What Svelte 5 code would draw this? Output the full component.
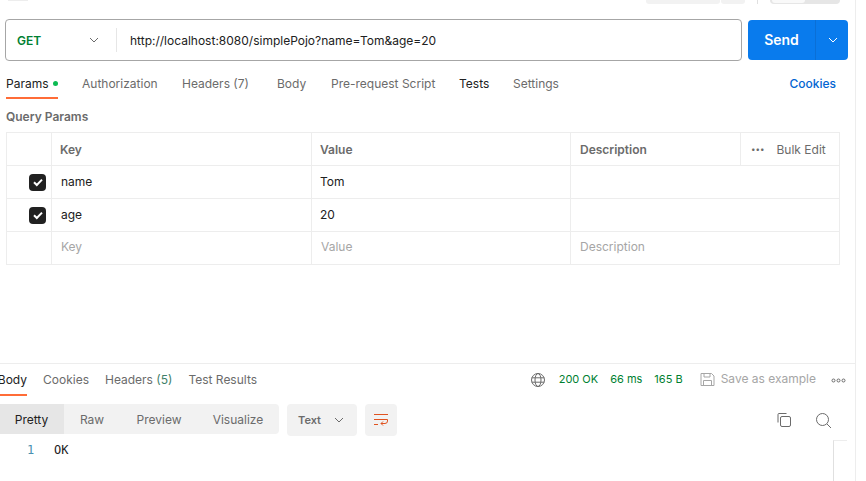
<script>
  const reqTabs = [
    { label: 'Authorization', w: 100 },
    { label: 'Headers (7)', w: 95 },
    { label: 'Body', w: 54 },
    { label: 'Pre-request Script', w: 128 },
  ];
  const rows = [
    { key: 'name', value: 'Tom' },
    { key: 'age', value: '20' },
  ];
</script>

<div class="page">
  <div class="main">
    <div class="top">
      <span class="stub-left"></span>
      <span class="spring"></span>
      <span class="stub a"></span>
      <span class="stub b"></span>
      <span class="vline"></span>
      <span class="toggle"><i></i></span>
    </div>

    <div class="urlrow">
      <div class="urlbox">
        <div class="method">
          <span>GET</span>
          <svg width="12" height="12" viewBox="0 0 12 12"><path d="M2 4l4 4 4-4" fill="none" stroke="#6b6b6b" stroke-width="1"/></svg>
        </div>
        <div class="url">http://localhost:8080/simplePojo?name=Tom&amp;age=20</div>
      </div>
      <div class="send">
        <span class="send-l">Send</span>
        <span class="send-r"><svg width="12" height="12" viewBox="0 0 12 12"><path d="M2 4l4 4 4-4" fill="none" stroke="#fff" stroke-width="1"/></svg></span>
      </div>
    </div>

    <div class="reqtabs">
      <span class="tab active first">Params<i class="dot"></i></span>
      {#each reqTabs as t}
        <span class="tab" style="width:{t.w}px">{t.label}</span>
      {/each}
      <span class="tab dark tests">Tests</span>
      <span class="tab">Settings</span>
      <span class="spring"></span>
      <span class="cookies">Cookies</span>
    </div>

    <div class="qp">Query Params</div>

    <div class="table">
      <div class="row head">
        <div class="c check"></div>
        <div class="c key">Key</div>
        <div class="c val">Value</div>
        <div class="c desc">Description</div>
        <div class="c bulk"><span class="dots">•••</span><span>Bulk Edit</span></div>
      </div>
      {#each rows as r}
        <div class="row body">
          <div class="c check">
            <span class="box"><svg width="12" height="12" viewBox="0 0 12 12"><path d="M2 6.200l2.800 2.800L10 3.600" fill="none" stroke="#fff" stroke-width="2"/></svg></span>
          </div>
          <div class="c key">{r.key}</div>
          <div class="c val">{r.value}</div>
          <div class="c desc wide"></div>
        </div>
      {/each}
      <div class="row ph">
        <div class="c check"></div>
        <div class="c key">Key</div>
        <div class="c val">Value</div>
        <div class="c desc wide">Description</div>
      </div>
    </div>

    <div class="response">
      <div class="restabs">
        <span class="rtab active">Body</span>
        <span class="rtab">Cookies</span>
        <span class="rtab">Headers <em>(5)</em></span>
        <span class="rtab">Test Results</span>
        <span class="spring"></span>
        <svg class="globe" width="16" height="16" viewBox="0 0 16 16" fill="none" stroke="#6b6b6b"><circle cx="8" cy="8" r="6.500"/><ellipse cx="8" cy="8" rx="3" ry="6.500"/><path d="M1.800 5.800h12.400M1.800 10.200h12.400"/></svg>
        <span class="stat s1">200 OK</span>
        <span class="stat s2">66 ms</span>
        <span class="stat s3">165 B</span>
        <svg class="save" width="15" height="15" viewBox="0 0 15 15" fill="none" stroke="#a6a6a6"><path d="M1 1.500h10.500l2.500 2.500v9.500H1z"/><path d="M4 1.500v3.500h6V1.500M3.500 13.500V8.500h8v5"/></svg>
        <span class="saveas">Save as example</span>
        <svg class="more" width="15" height="5" viewBox="0 0 15 5" fill="none" stroke="#6b6b6b"><circle cx="2.500" cy="2.500" r="1.500"/><circle cx="7.500" cy="2.500" r="1.500"/><circle cx="12.500" cy="2.500" r="1.500"/></svg>
      </div>

      <div class="toolbar">
        <div class="seg">
          <span class="on">Pretty</span>
          <span class="raw">Raw</span>
          <span class="prev">Preview</span>
          <span class="vis">Visualize</span>
        </div>
        <div class="select">
          <span>Text</span>
          <svg width="12" height="12" viewBox="0 0 12 12"><path d="M2 4l4 4 4-4" fill="none" stroke="#6b6b6b" stroke-width="1"/></svg>
        </div>
        <div class="wrap">
          <svg width="16" height="16" viewBox="0 0 16 16" fill="none" stroke="#e05320"><path d="M1 2.500h14M1 7.500h13.500v1.500a2.500 2.500 0 0 1-2.500 2.500H8M1 12.500h4"/><path d="M10 9.500l-2 2 2 2"/></svg>
        </div>
        <span class="spring"></span>
        <svg class="copy" width="16" height="16" viewBox="0 0 16 16" fill="none" stroke="#6b6b6b"><rect x="4.500" y="4.500" width="10" height="10" rx="1.500"/><path d="M2 10.500V2.500a1 1 0 0 1 1-1h7.500"/></svg>
        <svg class="search" width="17" height="17" viewBox="0 0 17 17" fill="none" stroke="#6b6b6b"><circle cx="7.500" cy="7.500" r="6"/><path d="M12 12l4 4"/></svg>
      </div>

      <div class="code">
        <span class="ln">1</span>
        <span class="ok">OK</span>
        <span class="spring"></span>
        <span class="gutter"></span>
      </div>
    </div>
  </div>
</div>

<style>
  :global(body) { margin: 0; background: #fff; }
  .page {
    width: 866px; height: 481px; overflow: hidden; box-sizing: border-box;
    font-family: Inter, "Liberation Sans", sans-serif; font-size: 12px; color: #6b6b6b;
  }
  .main { width: 855px; height: 481px; border-right: 1px solid #ededed; box-sizing: content-box; display: flex; flex-direction: column; }
  .spring { flex: 1; }

  .top { height: 19px; display: flex; align-items: flex-start; padding: 0 15px 0 8px; box-sizing: border-box; }
  .stub-left { width: 20px; height: 1px; background: #ededed; }
  .stub { height: 4px; background: #f2f2f2; border-radius: 0 0 3px 3px; }
  .stub.a { width: 74px; }
  .stub.b { width: 24px; margin-left: 1px; }
  .vline { width: 1px; height: 4px; background: #e0e0e0; margin: 0 12px; }
  .toggle { width: 70px; height: 4px; background: #e6e6e6; border-radius: 0 0 4px 4px; display: block; }
  .toggle i { display: block; width: 33px; height: 3px; background: #f9f9f9; margin-left: 2px; border-radius: 0 0 3px 3px; }

  .urlrow { display: flex; padding: 0 7px 0 5px; gap: 6px; height: 42px; }
  .urlbox { flex: 1; border: 1px solid #a6a6a6; border-radius: 4px; display: flex; align-items: center; box-sizing: border-box; }
  .method { width: 111px; height: 24px; border-right: 1px solid #e6e6e6; display: flex; align-items: center; justify-content: space-between; padding: 0 16px 0 11px; box-sizing: border-box; font-weight: 600; font-size: 12px; color: #007f31; }
  .url { padding-left: 13px; color: #212121; font-size: 12px; }
  .send { width: 100px; height: 40px; margin-top: 1px; background: #097bed; border-radius: 4px; display: flex; color: #fff; font-weight: 600; font-size: 14px; }
  .send-l { width: 68px; display: flex; align-items: center; justify-content: center; box-sizing: border-box; border-right: 1px solid #0a6fd6; padding-bottom: 1px; }
  .send-r { flex: 1; display: flex; align-items: center; justify-content: center; padding-left: 1px; }

  .reqtabs { display: flex; align-items: center; height: 39px; padding: 0 19px 0 6px; box-sizing: border-box; margin-top: 3px; }
  .tab { display: flex; align-items: center; height: 30px; box-sizing: border-box; white-space: nowrap; color: #6b6b6b; padding-bottom: 1px; margin-top: 1px; }
  .tab.first { width: 52px; color: #212121; border-bottom: 2px solid #ff6c37; height: 30px; padding-bottom: 0; margin-right: 24px; }
  .tab.dark { color: #212121; }
  .tab.tests { width: 54px; }
  .dot { width: 5px; height: 5px; border-radius: 50%; background: #0cbb52; margin-left: 4px; }
  .cookies { color: #0265d2; font-weight: 500; }

  .qp { font-weight: 600; color: #6b6b6b; font-size: 12px; height: 15px; line-height: 15px; padding-left: 6px; margin-top: 6px; margin-bottom: 8px; }

  .table { margin-left: 6px; width: 834px; border-top: 1px solid #ededed; border-left: 1px solid #ededed; box-sizing: border-box; }
  .row { display: flex; height: 33px; border-bottom: 1px solid #ededed; box-sizing: border-box; }
  .c { border-right: 1px solid #ededed; display: flex; align-items: center; box-sizing: border-box; color: #212121; padding-left: 9px; }
  .check { width: 45px; padding: 0; justify-content: flex-end; padding-right: 5px; }
  .key { width: 260px; }
  .val { width: 259px; }
  .desc { width: 170px; }
  .desc.wide { width: 269px; }
  .bulk { width: 99px; padding-left: 10px; color: #6b6b6b; justify-content: flex-start; }
  .dots { font-size: 8px; margin-right: 12px; letter-spacing: 0; color: #6b6b6b; }
  .head .key, .head .val { padding-left: 8px; }
  .head .c:not(.bulk) { color: #6b6b6b; font-weight: 600; }
  .body .key, .body .val { padding-bottom: 2px; }
  .body .val { padding-left: 8px; }
  .ph .c { color: #a6a6a6; padding-bottom: 4px; }
  .box { width: 17px; height: 17px; border-radius: 4px; background: #212121; display: flex; align-items: center; justify-content: center; }

  .response { margin-top: 98px; border-top: 1px solid #ededed; flex: 1; display: flex; flex-direction: column; }
  .restabs { display: flex; align-items: center; height: 32px; padding-right: 9px; box-sizing: border-box; }
  .rtab { height: 32px; display: flex; align-items: center; margin-right: 16px; box-sizing: border-box; white-space: pre; padding-bottom: 2px; }
  .rtab em { font-style: normal; color: #3f7f6a; }
  .rtab.active { color: #212121; border-bottom: 2px solid #ff6c37; width: 27px; margin-right: 16px; justify-content: flex-end; padding-bottom: 0; }
  .globe { margin-right: 13px; }
  .stat { color: #007f31; font-size: 11px; padding-bottom: 2px; }
  .s1 { margin-right: 12px; }
  .s2 { margin-right: 12px; }
  .s3 { margin-right: 17px; }
  .save { margin-right: 6px; margin-bottom: 2px; }
  .saveas { color: #a6a6a6; margin-right: 15px; margin-bottom: 4px; }

  .toolbar { display: flex; align-items: flex-start; margin-top: 8px; height: 36px; padding-right: 23px; box-sizing: border-box; }
  .seg { display: flex; width: 279px; height: 30px; background: #f2f2f2; border-radius: 0 4px 4px 0; }
  .seg span { display: flex; align-items: center; justify-content: center; }
  .seg .on { width: 64px; background: #e6e6e6; color: #212121; padding-right: 1px; box-sizing: border-box; }
  .seg .raw { width: 56px; }
  .seg .prev { width: 78px; }
  .seg .vis { width: 64px; margin-left: 8px; }
  .select { margin-left: 8px; width: 70px; height: 32px; background: #f2f2f2; border-radius: 4px; display: flex; align-items: center; justify-content: space-between; padding: 0 12px 0 11px; box-sizing: border-box; font-size: 11px; font-weight: 600; }
  .wrap { margin-left: 8px; width: 32px; height: 32px; background: #f2f2f2; border-radius: 4px; display: flex; align-items: center; justify-content: center; }
  .copy { margin-top: 8px; margin-right: 23px; }
  .search { margin-top: 8px; }

  .code { display: flex; height: 41px; padding-right: 8px; font-family: "DejaVu Sans Mono", "Liberation Mono", monospace; font-size: 12px; line-height: 18px; }
  .ln { margin-left: 27px; color: #4a8fb0; width: 27px; margin-top: 1px; }
  .ok { color: #212121; margin-top: 1px; }
  .gutter { width: 14px; box-sizing: border-box; border-left: 1px solid #e0e0e0; border-top: 1px solid #ededed; height: 41px; }
</style>
